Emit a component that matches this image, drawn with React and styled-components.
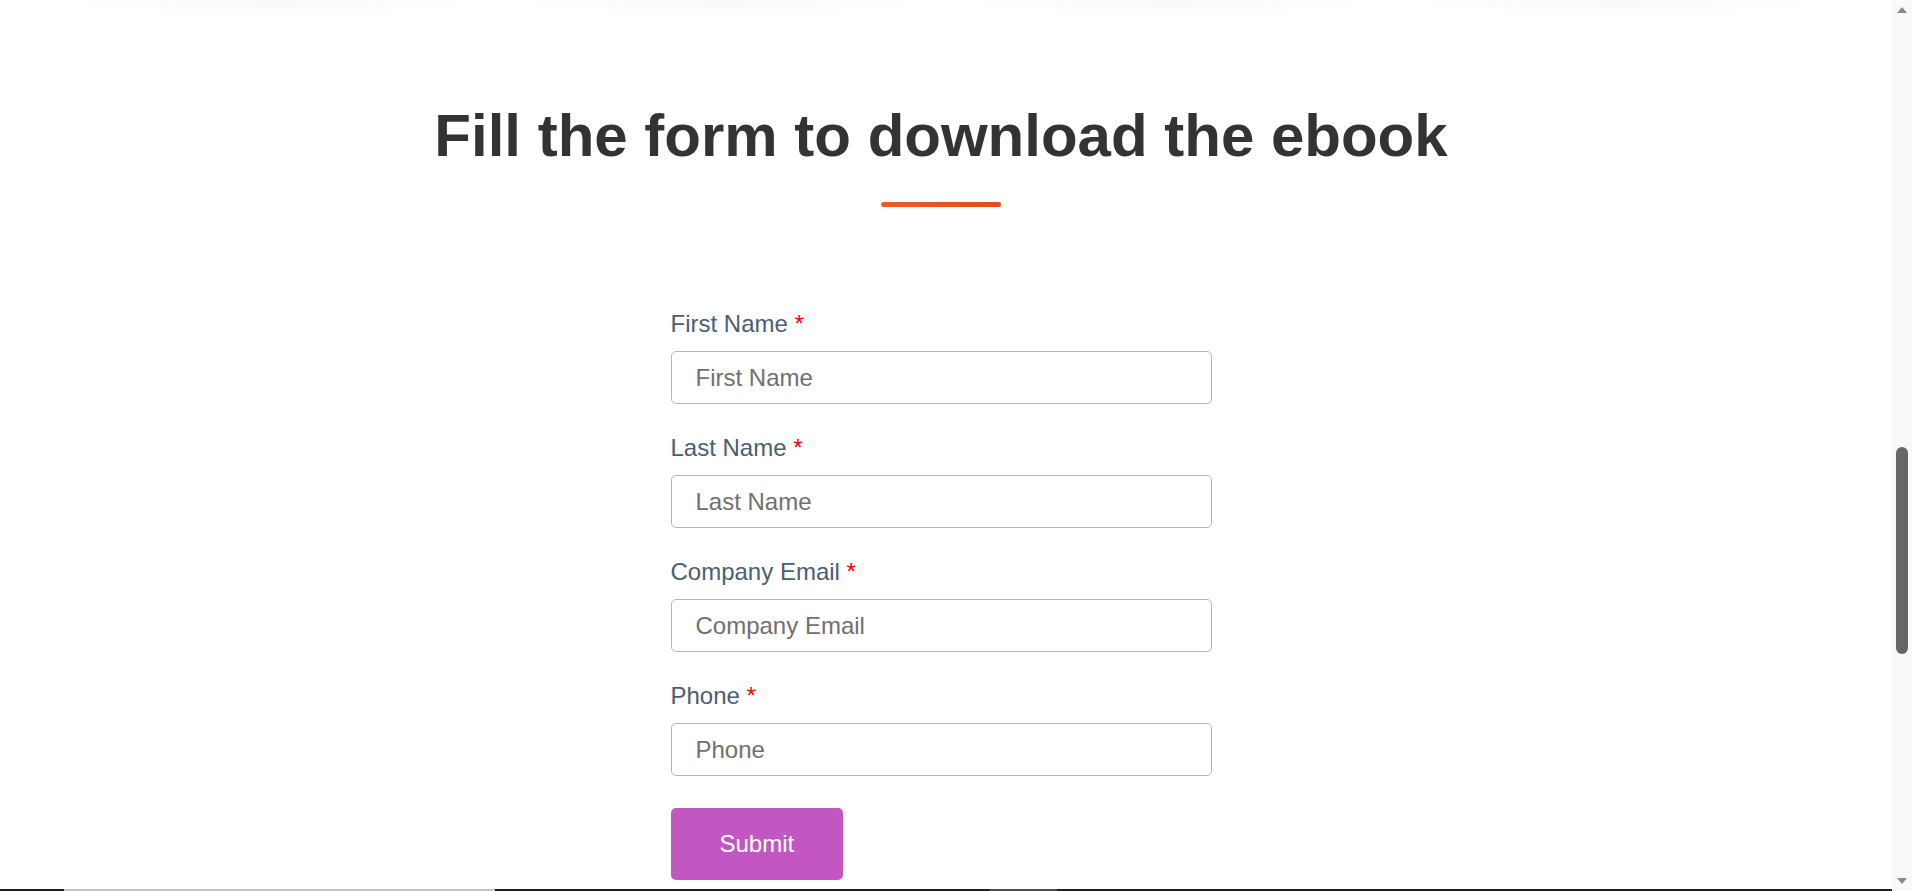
import React from 'react';
import styled, { createGlobalStyle } from 'styled-components';

const GlobalStyle = createGlobalStyle`
  html, body {
    margin: 0;
    padding: 0;
    background: #fff;
    overflow: hidden;
  }
  body {
    font-family: "Liberation Sans", Arial, sans-serif;
  }
  * {
    box-sizing: border-box;
  }
`;

const Screen = styled.div`
  display: flex;
  width: 100%;
  height: 100vh;
`;

const Page = styled.main`
  flex: 1;
  min-width: 0;
  display: flex;
  flex-direction: column;
  background: #fff;
`;

const ShadowRow = styled.div`
  display: flex;
  justify-content: center;
  gap: 60px;
  height: 16px;
  flex-shrink: 0;
`;

const CardShadow = styled.div`
  width: 388px;
  height: 16px;
  background: radial-gradient(ellipse 55% 100% at 50% 0%, rgba(0, 0, 0, 0.028), rgba(0, 0, 0, 0) 100%);
`;

const Section = styled.section`
  flex: 1;
  display: flex;
  flex-direction: column;
  align-items: center;
  padding: 84px 10px 0 0;
`;

const Heading = styled.h2`
  margin: 0;
  font-size: 60px;
  line-height: 72px;
  font-weight: 700;
  color: #333;
  text-align: center;
`;

const Underline = styled.span`
  display: block;
  width: 120px;
  height: 5px;
  margin-top: 30px;
  border-radius: 3px;
  background: linear-gradient(90deg, #f15a29, #e14a1b);
`;

const Form = styled.form`
  width: 541px;
  margin-top: 102px;
  display: flex;
  flex-direction: column;
`;

const Field = styled.div`
  display: flex;
  flex-direction: column;
  margin-bottom: 29px;
`;

const Label = styled.label`
  font-size: 24px;
  line-height: 29px;
  color: #4b5e73;
  margin-bottom: 13px;
`;

const Required = styled.span`
  color: #ff0000;
`;

const Input = styled.input`
  height: 53px;
  padding: 0 24px;
  border: 1px solid #b5b5b5;
  border-radius: 5px;
  font-family: inherit;
  font-size: 24px;
  color: #333;
  background: #fff;
  outline: none;

  &::placeholder {
    color: #707070;
  }
`;

const Submit = styled.button`
  align-self: flex-start;
  margin-top: 3px;
  padding: 21px 49px 22px;
  border: none;
  border-radius: 5px;
  background: #c257c2;
  color: #fff;
  font-family: inherit;
  font-size: 24px;
  line-height: 29px;
  cursor: pointer;
`;

const BottomEdge = styled.div`
  height: 2px;
  flex-shrink: 0;
  background: linear-gradient(
    90deg,
    #1f1f22 0 64px,
    #c3c3c3 64px 495px,
    #1f1f22 495px 990px,
    #4d4d55 990px 1057px,
    #1f1f22 1057px
  );
`;

const Scrollbar = styled.div`
  width: 20px;
  flex-shrink: 0;
  display: flex;
  flex-direction: column;
  align-items: center;
  background: #f9f9f9;
`;

const Arrow = styled.div`
  height: 20px;
  display: flex;
  align-items: center;
  justify-content: center;

  &::before {
    content: '';
    width: 0;
    height: 0;
    border-left: 5px solid transparent;
    border-right: 5px solid transparent;
    ${p => (p.$down ? 'border-top: 6px solid #8a8a8a;' : 'border-bottom: 6px solid #8a8a8a;')}
  }
`;

const Track = styled.div`
  flex: 1;
  width: 100%;
  display: flex;
  justify-content: center;
`;

const Thumb = styled.div`
  width: 12px;
  height: 207px;
  margin-top: 427px;
  border-radius: 6px;
  background: #666;
`;

const fields = [
  { id: 'firstname', label: 'First Name', type: 'text' },
  { id: 'lastname', label: 'Last Name', type: 'text' },
  { id: 'email', label: 'Company Email', type: 'email' },
  { id: 'phone', label: 'Phone', type: 'tel' },
];

export default function App() {
  return (
    <>
      <GlobalStyle />
      <Screen>
        <Page>
          <ShadowRow>
            {[0, 1, 2, 3].map(i => (
              <CardShadow key={i} />
            ))}
          </ShadowRow>
          <Section>
            <Heading>Fill the form to download the ebook</Heading>
            <Underline />
            <Form onSubmit={e => e.preventDefault()}>
              {fields.map(f => (
                <Field key={f.id}>
                  <Label htmlFor={f.id}>
                    {f.label} <Required>*</Required>
                  </Label>
                  <Input id={f.id} type={f.type} placeholder={f.label} />
                </Field>
              ))}
              <Submit type="submit">Submit</Submit>
            </Form>
          </Section>
          <BottomEdge />
        </Page>
        <Scrollbar>
          <Arrow />
          <Track>
            <Thumb />
          </Track>
          <Arrow $down />
        </Scrollbar>
      </Screen>
    </>
  );
}
